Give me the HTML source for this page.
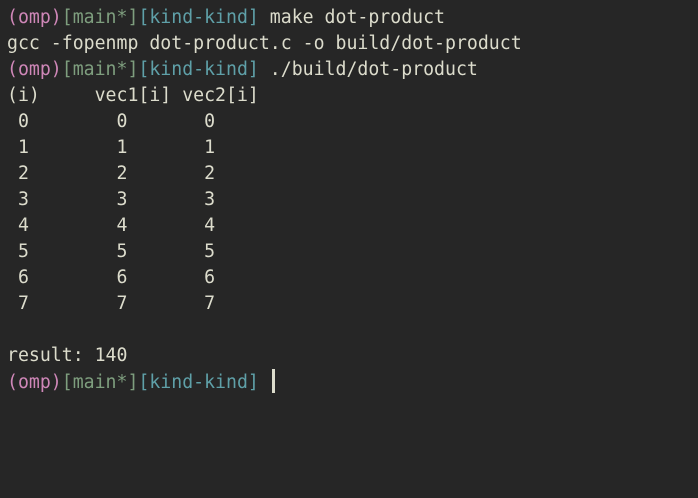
<!DOCTYPE html>
<html><head><meta charset="utf-8"><style>
html,body{margin:0;padding:0;background:#262626;width:698px;height:498px;overflow:hidden}
pre{margin:0;position:absolute;left:7px;top:5px;font-family:"DejaVu Sans Mono","Liberation Mono",monospace;font-size:18.2px;line-height:26px;color:#dcdccc}
.p{color:#cf87b8}.g{color:#7e9e7e}.t{color:#5fa0a8}
.c{display:inline-block;width:3px;height:24px;background:#dcdccc;vertical-align:-5px;margin-left:2px}
</style></head><body><pre><span class="p">(omp)</span><span class="g">[main*]</span><span class="t">[kind-kind]</span> make dot-product
gcc -fopenmp dot-product.c -o build/dot-product
<span class="p">(omp)</span><span class="g">[main*]</span><span class="t">[kind-kind]</span> ./build/dot-product
(i)     vec1[i] vec2[i]
 0        0       0
 1        1       1
 2        2       2
 3        3       3
 4        4       4
 5        5       5
 6        6       6
 7        7       7

result: 140
<span class="p">(omp)</span><span class="g">[main*]</span><span class="t">[kind-kind]</span> <span class="c"></span></pre></body></html>
